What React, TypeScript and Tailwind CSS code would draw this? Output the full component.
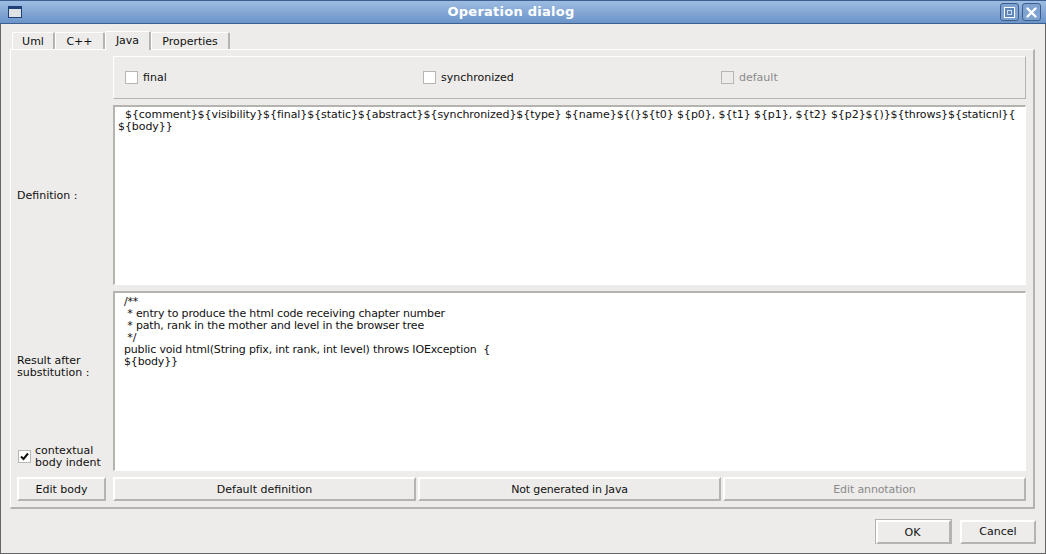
const raised = "border border-t-white border-l-white border-r-[#b5b3b0] border-b-[#b5b3b0]";
const sunken = "border border-t-[#b5b3b0] border-l-[#b5b3b0] border-r-white border-b-white";

function Check({ checked, disabled }: { checked?: boolean; disabled?: boolean }) {
  return (
    <span
      className={`flex items-center justify-center w-[13px] h-[13px] shrink-0 border border-[#b8b6b3] ${
        disabled ? "bg-[#edecea]" : "bg-white"
      }`}
    >
      {checked && (
        <svg width="9" height="9" viewBox="0 0 9 9">
          <path d="M1 4.5 L3.5 7 L8 1.5" fill="none" stroke="#111" strokeWidth="2" />
        </svg>
      )}
    </span>
  );
}

function Btn({ label, disabled, className }: { label: string; disabled?: boolean; className?: string }) {
  return (
    <div
      className={`flex items-center justify-center h-[24px] pt-px bg-[#edecea] border-2 border-t-white border-l-white border-r-[#b5b3b0] border-b-[#b5b3b0] ${
        disabled ? "text-[#8a8a8a]" : "text-[#101010]"
      } ${className ?? ""}`}
    >
      {label}
    </div>
  );
}

function Tab({ label, active, w }: { label: string; active?: boolean; w: string }) {
  return (
    <div
      className={`flex items-center justify-center border-l border-t border-r-2 border-l-white border-t-white border-r-[#b5b3b0] rounded-t-[2px] ${w} ${
        active ? "h-[19px] -mb-px relative z-10 bg-[#edecea]" : "h-[17px] pt-px"
      }`}
    >
      {label}
    </div>
  );
}

export default function App() {
  return (
    <div
      className="w-[1046px] h-[554px] flex flex-col overflow-hidden bg-[#edecea] text-[11px] leading-[12px] text-[#101010]"
      style={{ fontFamily: '"DejaVu Sans", sans-serif' }}
    >
      {/* Title bar */}
      <header className="h-[24px] shrink-0 flex items-center justify-between pl-[8px] pr-[5px] bg-gradient-to-b from-[#9dbce2] to-[#6b94c8] border-t border-[#3d5f8f] border-b border-b-[#3d5f8f]">
        <span className="w-[14px] h-[12px] border border-[#1f3f78] border-t-[3px] bg-[#dfe3e6]" />
        <span className="font-bold text-[13px] text-white tracking-[0.25px]">Operation dialog</span>
        <div className="flex gap-[3px]">
          <span className="flex items-center justify-center w-[19px] h-[18px] rounded-[3px] border border-[#3d5f8f] bg-[#7fa3d1]">
            <span className="flex items-center justify-center w-[11px] h-[11px] border border-white bg-[#5f86bb]">
              <span className="w-[5px] h-[5px] border border-white/70" />
            </span>
          </span>
          <span className="flex items-center justify-center w-[19px] h-[18px] rounded-[3px] border border-[#3d5f8f] bg-[#7fa3d1]">
            <svg width="11" height="11" viewBox="0 0 11 11">
              <path d="M1.5 1.5 L9.5 9.5 M9.5 1.5 L1.5 9.5" stroke="white" strokeWidth="2.4" strokeLinecap="round" />
            </svg>
          </span>
        </div>
      </header>

      {/* Window body */}
      <div className="flex-1 flex flex-col border-x border-b border-[#666] pl-[9px] pr-[10px] pt-[8px]">
        <div className="flex items-end pl-[2px] h-[17px]">
          <Tab label="Uml" w="w-[43px]" />
          <Tab label="C++" w="w-[50px]" />
          <Tab label="Java" active w="w-[46px]" />
          <Tab label="Properties" w="w-[79px]" />
        </div>

        <div className={`h-[460px] ${raised} border-r-2 border-b-2 pl-[6px] pr-[7px] pt-[6px]`}>
          <div className="grid grid-cols-[89px_1fr] grid-rows-[43px_180px_180px_24px] gap-x-[7px] gap-y-[6px]">
            <div />
            <div className={`grid grid-cols-[298px_298px_1fr] items-center pl-[11px] ${raised}`}>
              <label className="flex items-center gap-[5px]">
                <Check />
                final
              </label>
              <label className="flex items-center gap-[5px]">
                <Check />
                synchronized
              </label>
              <label className="flex items-center gap-[5px] text-[#8a8a8a]">
                <Check disabled />
                default
              </label>
            </div>

            <div className="flex items-center pt-[2px]">Definition :</div>
            <div className={`bg-white pl-[3px] pt-[2px] whitespace-pre tracking-[-0.065px] ${sunken} border-t-2 border-l-2`}>
              <span className="inline-block w-[7px]" />
              {"${comment}${visibility}${final}${static}${abstract}${synchronized}${type} ${name}${(}${t0} ${p0}, ${t1} ${p1}, ${t2} ${p2}${)}${throws}${staticnl}{\n${body}}"}
            </div>

            <div className="flex flex-col">
              <div className="flex-1 flex items-center pt-[2px]">
                <span>
                  Result after
                  <br />
                  substitution :
                </span>
              </div>
              <label className="h-[30px] flex items-center gap-[4px] pl-[1px]">
                <Check checked />
                <span className="pt-[2px]">
                  contextual
                  <br />
                  body indent
                </span>
              </label>
            </div>
            <div className={`bg-white pl-[9px] pt-[3px] whitespace-pre tracking-[-0.17px] ${sunken} border-t-2 border-l-2`}>
              {"/**\n * entry to produce the html code receiving chapter number\n * path, rank in the mother and level in the browser tree\n */\npublic void html(String pfix, int rank, int level) throws IOException  {\n${body}}"}
            </div>

            <Btn label="Edit body" />
            <div className="grid grid-cols-3 gap-[2px]">
              <Btn label="Default definition" />
              <Btn label="Not generated in Java" className="tracking-[-0.15px]" />
              <Btn label="Edit annotation" disabled className="tracking-[-0.13px]" />
            </div>
          </div>
        </div>

        <div className="flex justify-end items-center gap-[8px] mt-[10px] -mr-px">
          <div className="w-[77px] h-[25px] border border-[#b5b3b0]">
            <Btn label="OK" className="h-[23px] pr-[2px]" />
          </div>
          <Btn label="Cancel" className="w-[76px] h-[23px]" />
        </div>
      </div>
    </div>
  );
}
